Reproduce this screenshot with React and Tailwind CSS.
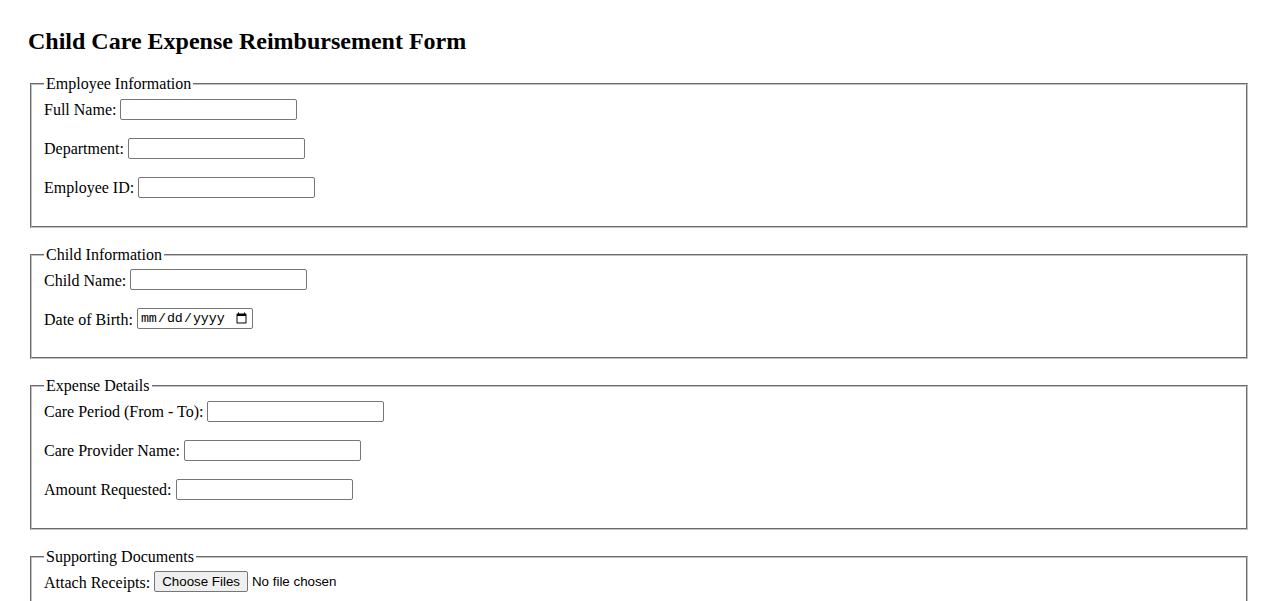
import React from "react";

const fs = "mx-[2px] mb-[18px] border-2 [border-style:groove] border-[#c0c0c0] px-3 pt-[0.35em] pb-[0.625em] min-w-0";
const lg = "px-[2px]";
const row = "flex items-center gap-1 h-[23px] mb-4";
const inp = "self-start w-[177px] h-[21px] border border-[#767676] rounded-[2px] px-[2px] bg-white text-[13.33px] [font-family:'Liberation_Sans',Arial,sans-serif]";

function Field({ label, id, type = "text" }) {
  return (
    <div className={row}>
      <label htmlFor={id}>{label}</label>
      <input id={id} type={type} className={inp} />
    </div>
  );
}

export default function App() {
  return (
    <div className="p-[28px] pt-[28px] text-[16px] text-black bg-white [font-family:'Liberation_Serif','Times_New_Roman',serif] leading-[normal]">
      <h1 className="text-[24px] font-bold mb-5 leading-[normal]">Child Care Expense Reimbursement Form</h1>
      <form>
        <fieldset className={fs}>
          <legend className={lg}>Employee Information</legend>
          <Field label="Full Name:" id="fn" />
          <Field label="Department:" id="dep" />
          <Field label="Employee ID:" id="eid" />
        </fieldset>
        <fieldset className={fs}>
          <legend className={lg}>Child Information</legend>
          <Field label="Child Name:" id="cn" />
          <div className={row}>
            <label htmlFor="dob">Date of Birth:</label>
            <input
              id="dob"
              type="date"
              className="self-start w-[116px] h-[21px] border border-[#767676] rounded-[2px] px-[2px] bg-white text-[13.33px] [font-family:'Liberation_Mono','DejaVu_Sans_Mono',monospace]"
            />
          </div>
        </fieldset>
        <fieldset className={fs}>
          <legend className={lg}>Expense Details</legend>
          <Field label="Care Period (From - To):" id="cp" />
          <Field label="Care Provider Name:" id="cpn" />
          <Field label="Amount Requested:" id="amt" />
        </fieldset>
        <fieldset className={fs}>
          <legend className={lg}>Supporting Documents</legend>
          <div className={row}>
            <label htmlFor="rc">Attach Receipts:</label>
            <input
              id="rc"
              type="file"
              multiple
              className="self-start text-[13.33px] [font-family:'Liberation_Sans',Arial,sans-serif] file:h-[21px] file:border file:border-[#767676] file:rounded-[2px] file:bg-[#efefef] file:px-[7px] file:mr-[4px] file:text-black"
            />
          </div>
        </fieldset>
      </form>
    </div>
  );
}
